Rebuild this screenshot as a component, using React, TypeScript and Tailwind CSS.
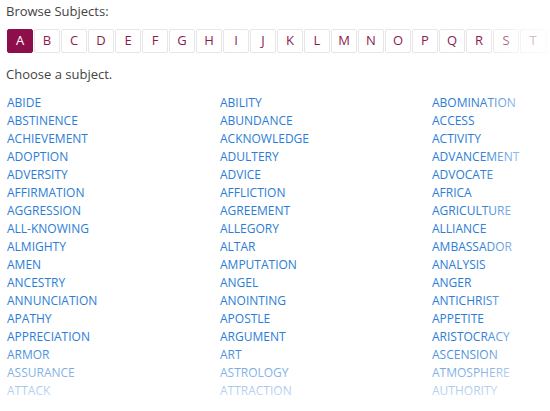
const letters = "ABCDEFGHIJKLMNOPQRSTUVWXYZ".split("");

const rows: [string, string, string][] = [
  ["ABIDE", "ABILITY", "ABOMINATION"],
  ["ABSTINENCE", "ABUNDANCE", "ACCESS"],
  ["ACHIEVEMENT", "ACKNOWLEDGE", "ACTIVITY"],
  ["ADOPTION", "ADULTERY", "ADVANCEMENT"],
  ["ADVERSITY", "ADVICE", "ADVOCATE"],
  ["AFFIRMATION", "AFFLICTION", "AFRICA"],
  ["AGGRESSION", "AGREEMENT", "AGRICULTURE"],
  ["ALL-KNOWING", "ALLEGORY", "ALLIANCE"],
  ["ALMIGHTY", "ALTAR", "AMBASSADOR"],
  ["AMEN", "AMPUTATION", "ANALYSIS"],
  ["ANCESTRY", "ANGEL", "ANGER"],
  ["ANNUNCIATION", "ANOINTING", "ANTICHRIST"],
  ["APATHY", "APOSTLE", "APPETITE"],
  ["APPRECIATION", "ARGUMENT", "ARISTOCRACY"],
  ["ARMOR", "ART", "ASCENSION"],
  ["ASSURANCE", "ASTROLOGY", "ATMOSPHERE"],
  ["ATTACK", "ATTRACTION", "AUTHORITY"],
];

export default function App() {
  return (
    <div className="relative h-[411px] w-[550px] overflow-hidden bg-white font-['Open_Sans',sans-serif] text-[#333]">
      <div className="px-[6px] pt-[2px]">
        <p className="text-[13px] leading-[18px] text-[#444]">Browse Subjects:</p>

        {/* letter pager */}
        <div className="mt-[9px] flex gap-[1px] pl-[1px]">
          {letters.map((l) => (
            <a
              key={l}
              href="#"
              className={`grid h-[24px] w-[26px] shrink-0 place-items-center rounded-[2px] border text-[13px] ${
                l === "A"
                  ? "border-[#8c0f4b] bg-[#8c0f4b] text-white"
                  : "border-[#e6e6e6] bg-white text-[#8c1a50]"
              }`}
            >
              {l}
            </a>
          ))}
        </div>

        <p className="mt-[12px] text-[13px] leading-[18px] text-[#444]">Choose a subject.</p>

        <div className="mt-[11px] grid grid-cols-[213px_212px_220px] pl-[1px]">
          {rows.map((r) =>
            r.map((w, i) => (
              <a key={w + i} href="#" className="whitespace-nowrap text-[12px] leading-[18px] text-[#2b7dd6]">
                {w}
              </a>
            ))
          )}
        </div>
      </div>

      {/* edge fades */}
      <div className="pointer-events-none absolute inset-y-0 right-0 w-[70px] bg-gradient-to-r from-white/0 to-white/90" />
      <div className="pointer-events-none absolute inset-x-0 bottom-0 h-[70px] bg-gradient-to-b from-white/0 to-white/90" />
    </div>
  );
}
